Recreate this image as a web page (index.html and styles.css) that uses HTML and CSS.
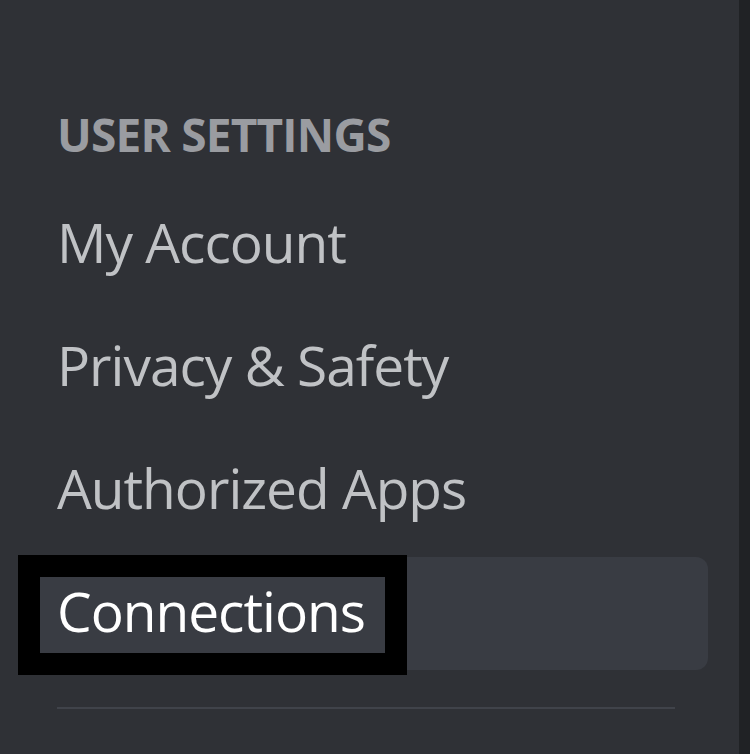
FILE: index.html
```html
<!DOCTYPE html>
<html lang="en">
<head>
<meta charset="utf-8">
<title>User Settings</title>
<link rel="stylesheet" href="styles.css">
</head>
<body>
<div class="app">
  <nav class="sidebar">
    <div class="header">User Settings</div>
    <div class="item">My Account</div>
    <div class="item">Privacy &amp; Safety</div>
    <div class="item">Authorized Apps</div>
    <div class="item selected">Connections<span class="highlight"></span></div>
    <div class="separator"></div>
  </nav>
  <div class="strip"></div>
</div>
</body>
</html>
```
FILE: styles.css
```css
html, body {
  margin: 0;
  padding: 0;
  background: #2f3136;
}
.app {
  display: flex;
  width: 750px;
  height: 754px;
  overflow: hidden;
}
.sidebar {
  width: 739px;
  box-sizing: border-box;
  padding: 104px 31px 0 20px;
  background: #2f3136;
  font-family: "Open Sans", "Noto Sans", sans-serif;
}
.strip {
  width: 11px;
  background: #202225;
}
.header {
  padding-left: 37px;
  font-size: 46px;
  line-height: 60px;
  font-weight: 700;
  letter-spacing: -0.8px;
  text-transform: uppercase;
  color: #9a9ca1;
  margin-bottom: 24px;
}
.item {
  position: relative;
  padding: 0 0 6px 37px;
  font-size: 55px;
  line-height: 107px;
  letter-spacing: -1px;
  color: #c0c2c5;
  border-radius: 12px;
  margin-bottom: 10px;
}
.item.selected {
  background: #393c43;
  color: #ffffff;
}
.highlight {
  position: absolute;
  left: -2px;
  top: -2px;
  width: 345px;
  height: 76px;
  border: 22px solid #000;
}
.separator {
  margin: 37px 33px 0 37px;
  height: 2px;
  background: #40434a;
}
```
